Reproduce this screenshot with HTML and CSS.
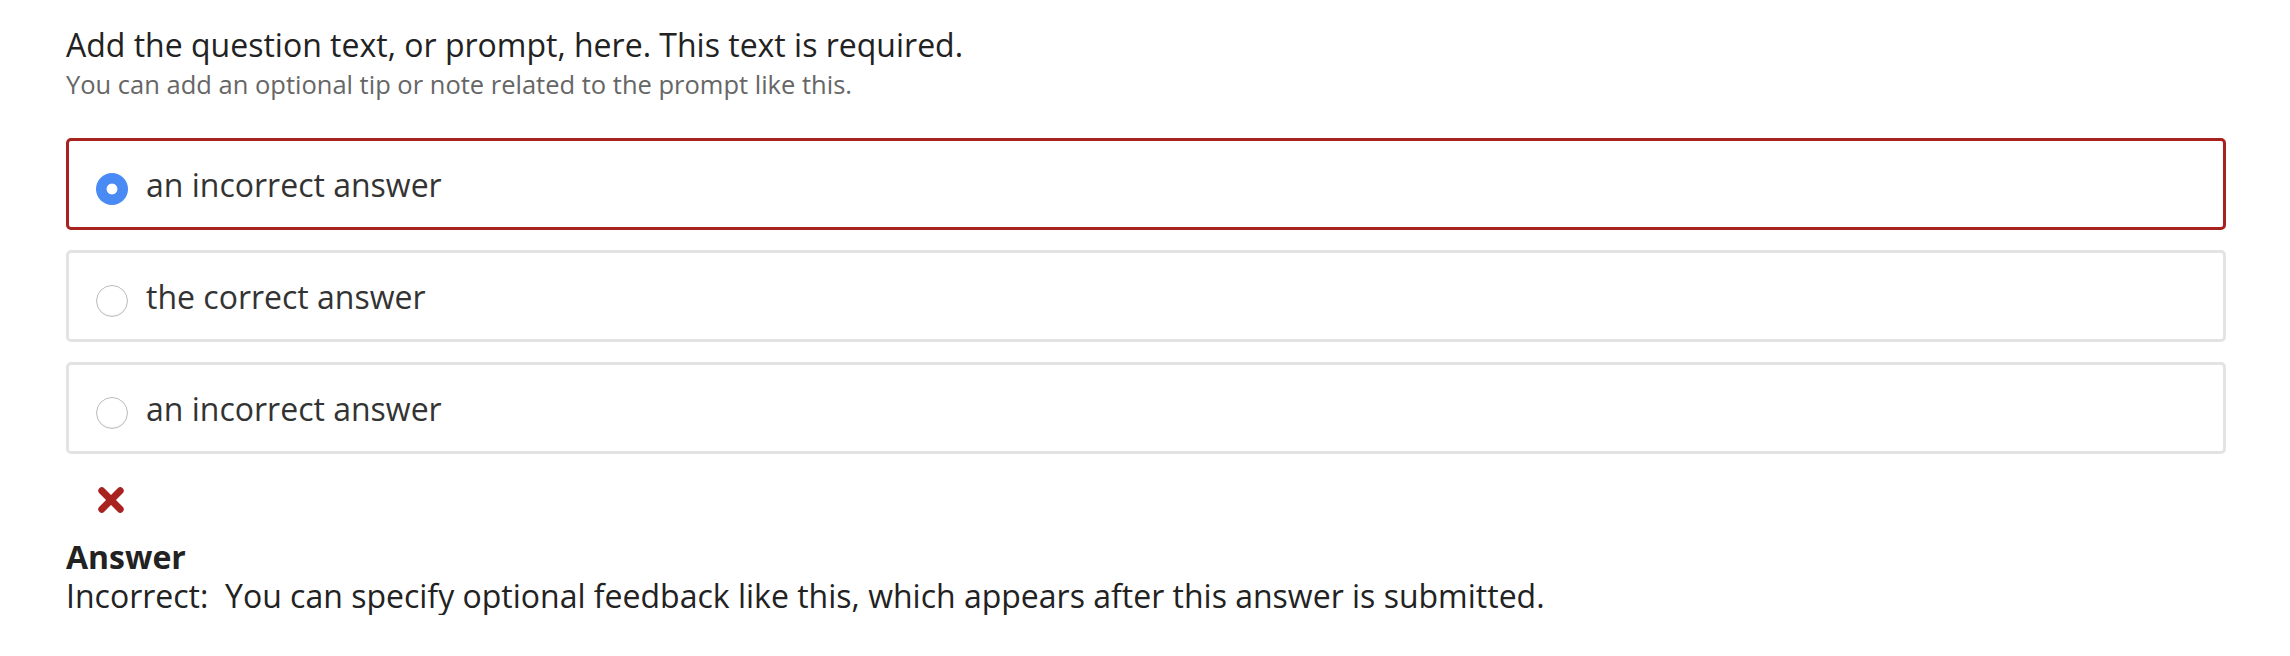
FILE: index.html
```html
<!DOCTYPE html>
<html>
<head>
<meta charset="utf-8">
<link rel="stylesheet" href="styles.css">
</head>
<body>
<main class="question">
  <div class="prompt">
    <div class="prompt-text">Add the question text, or prompt, here. This text is required.</div>
    <div class="prompt-tip">You can add an optional tip or note related to the prompt like this.</div>
  </div>
  <div class="options">
    <label class="option option--wrong">
      <span class="radio radio--checked"></span>
      <span class="option-label">an incorrect answer</span>
    </label>
    <label class="option">
      <span class="radio"></span>
      <span class="option-label">the correct answer</span>
    </label>
    <label class="option">
      <span class="radio"></span>
      <span class="option-label">an incorrect answer</span>
    </label>
  </div>
  <div class="feedback">
    <svg class="feedback-icon" viewBox="0 0 26 26" width="26" height="26" aria-hidden="true">
      <path d="M3.8 3.8 L22.2 22.2 M22.2 3.8 L3.8 22.2" stroke="#a8231f" stroke-width="7" stroke-linecap="round" fill="none"/>
    </svg>
    <div class="feedback-title">Answer</div>
    <div class="feedback-text">Incorrect:&nbsp; You can specify optional feedback like this, which appears after this answer is submitted.</div>
  </div>
</main>
</body>
</html>
```

FILE: styles.css
```css
html, body {
  margin: 0;
  padding: 0;
  background: #ffffff;
}

body {
  font-family: "Open Sans", "Liberation Sans", sans-serif;
  color: #222222;
}

.question {
  padding: 23px 64px 0 66px;
}

.prompt-text {
  font-size: 32px;
  line-height: 44px;
  color: #222222;
}

.prompt-tip {
  font-size: 25.5px;
  line-height: 35px;
  color: #666666;
}

.options {
  display: flex;
  flex-direction: column;
  gap: 20px;
  margin-top: 36px;
}

.option {
  display: flex;
  align-items: center;
  height: 92px;
  box-sizing: border-box;
  border: 3px solid #e3e3e3;
  border-radius: 5px;
  padding: 0 27px;
  background: #ffffff;
}

.option--wrong {
  border-color: #a8231f;
}

.radio {
  flex: none;
  width: 32px;
  height: 32px;
  margin-top: 9px;
  margin-right: 18px;
  box-sizing: border-box;
  border-radius: 50%;
  border: 1.5px solid #bcbcbc;
  background: #ffffff;
  box-shadow: inset 0 -1px 1px rgba(0, 0, 0, 0.06);
}

.radio--checked {
  border: none;
  background: radial-gradient(circle, #ffffff 0 5px, #4a8af4 5.8px);
  box-shadow: none;
}

.option-label {
  font-size: 32px;
  color: #333333;
}

.feedback {
  padding-top: 33px;
}

.feedback-icon {
  display: block;
  margin-left: 32px;
}

.feedback-title {
  margin-top: 24px;
  font-size: 32px;
  font-weight: 700;
  line-height: 39px;
  color: #222222;
}

.feedback-text {
  font-size: 32px;
  line-height: 39px;
  color: #222222;
}
```
